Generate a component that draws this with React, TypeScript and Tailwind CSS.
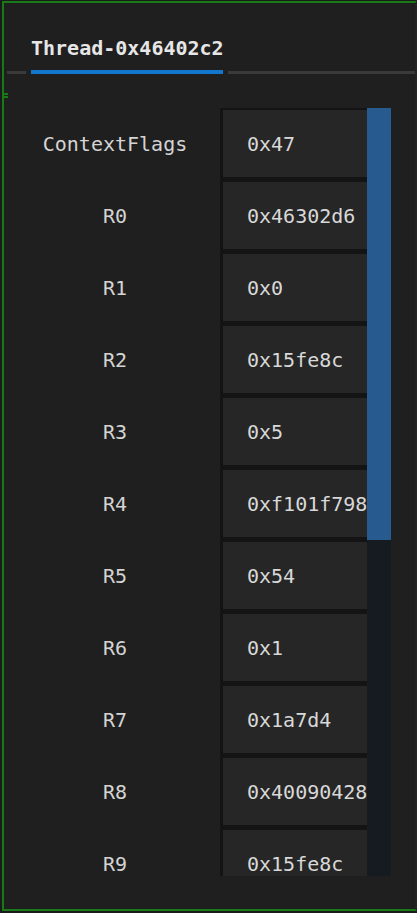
const rows: [string, string][] = [
  ["ContextFlags", "0x47"],
  ["R0", "0x46302d6"],
  ["R1", "0x0"],
  ["R2", "0x15fe8c"],
  ["R3", "0x5"],
  ["R4", "0xf101f798"],
  ["R5", "0x54"],
  ["R6", "0x1"],
  ["R7", "0x1a7d4"],
  ["R8", "0x40090428"],
  ["R9", "0x15fe8c"],
];

const mono = "font-['DejaVu_Sans_Mono','Liberation_Mono',monospace]";

export default function App() {
  return (
    <div className={`w-[417px] h-[913px] bg-[#1a1a1a] pt-[1px] pl-[2px] ${mono}`}>
      <div className="h-[910px] border-l-2 border-t-2 border-b-2 border-r-2 border-l-[#177a17] border-t-[#177a17] border-b-[#177a17] border-r-[#232323] bg-[#1f1f1f] flex flex-col overflow-hidden">
        {/* tab header */}
        <div className="pt-[33px] pl-[27px] h-[57px]">
          <span className="block text-[20px] leading-[24px] font-bold text-[#e6e6e6] whitespace-nowrap">
            Thread-0x46402c2
          </span>
        </div>
        <div className="mt-[10px] h-[4px] flex items-end">
          <div className="ml-[3px] w-[19px] h-[3px] bg-[#3a3a3a]" />
          <div className="ml-[5px] w-[192px] h-[4px] bg-[#1177cc]" />
          <div className="ml-[5px] flex-1 h-[3px] bg-[#3a3a3a]" />
        </div>

        {/* small frame tick */}
        <div className="mt-[19px] -ml-[2px] h-[5px] flex flex-col justify-between">
          <div className="w-[6px] h-[2px] bg-[#177a17]" />
          <div className="w-[6px] h-[2px] bg-[#177a17]" />
        </div>

        {/* register table */}
        <div className="mt-[10px] h-[768px] flex overflow-hidden">
          <div className="w-[363px] flex flex-col">
            <div className="ml-[216px] h-[2px] shrink-0 bg-[#141414]" />
            {rows.map(([name, value]) => (
              <div key={name} className="flex h-[72px] shrink-0">
                <div className="w-[216px] h-[67px] pl-[6px] flex items-center justify-center text-[20px] text-[#d4d4d4] whitespace-nowrap">
                  {name}
                </div>
                <div className="w-[147px] border-l-[3px] border-[#141414] bg-[#141414] pb-[5px]">
                  <div className="h-[67px] bg-[#262626] pl-[24px] flex items-center overflow-hidden whitespace-nowrap text-[20px] text-[#d8d8d8]">
                    {value}
                  </div>
                </div>
              </div>
            ))}
          </div>
          <div className="w-[24px] h-full bg-[#161b22] flex flex-col">
            <div className="h-[432px] bg-[#275a8e]" />
          </div>
        </div>
      </div>
    </div>
  );
}
